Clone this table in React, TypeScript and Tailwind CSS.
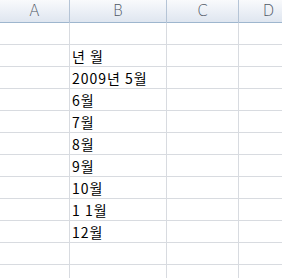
const cols = ["A", "B", "C", "D"];

const rows: string[] = [
  "",
  "년 월",
  "2009년 5월",
  "6월",
  "7월",
  "8월",
  "9월",
  "10월",
  "1 1월",
  "12월",
  "",
  "",
];

export default function App() {
  return (
    <div className="w-[282px] h-[278px] overflow-hidden bg-white font-['Noto_Sans_CJK_KR','Noto_Sans',sans-serif]">
      {/* Column headers */}
      <div className="grid grid-cols-[70px_97px_72px_60px] h-[23px] bg-gradient-to-b from-[#f9fafc] to-[#dfe6f0] border-b border-[#9eb6ce]">
        {cols.map((c) => (
          <div
            key={c}
            className="flex items-center justify-center border-r border-[#b5c4d6] text-[15px] text-[#4d5563] font-['DejaVu_Sans',sans-serif] font-light"
          >
            {c}
          </div>
        ))}
      </div>

      {/* Cells */}
      {rows.map((text, i) => (
        <div key={i} className="grid grid-cols-[70px_97px_72px_60px] h-[22px]">
          <div className="border-r border-b border-[#d8dbe0]" />
          <div className="border-r border-b border-[#d8dbe0] pl-[2px] flex items-center text-[14px] tracking-[1px] leading-none text-black whitespace-pre overflow-hidden">
            {text}
          </div>
          <div className="border-r border-b border-[#d8dbe0]" />
          <div className="border-r border-b border-[#d8dbe0]" />
        </div>
      ))}
    </div>
  );
}
